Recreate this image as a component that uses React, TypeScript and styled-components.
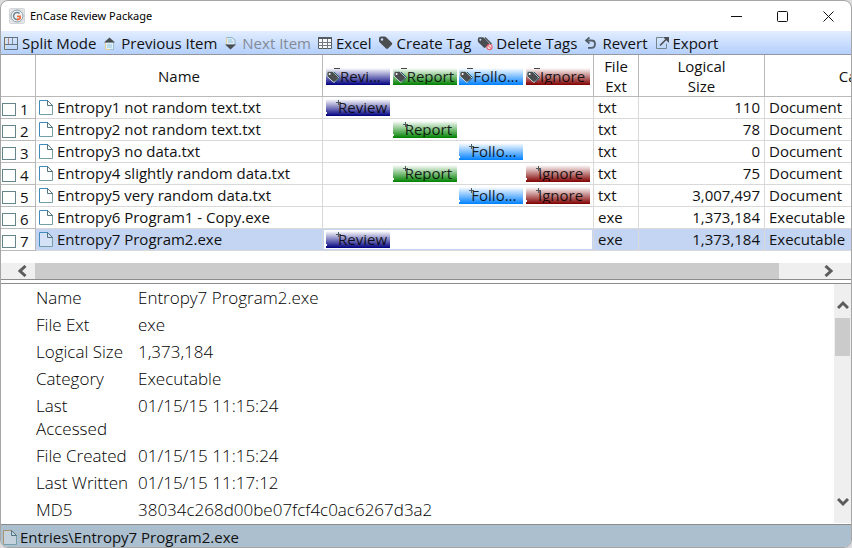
import React from "react";
import styled, { createGlobalStyle } from "styled-components";

const GlobalStyle = createGlobalStyle`
  *, *::before, *::after { box-sizing: border-box; }
  body { margin: 0; background: #dcdcdc; }
  body, button, input, table { font-family: "Open Sans", "Noto Sans", sans-serif; font-size: 15px; color: #111; }
`;

const Window = styled.main`
  display: flex;
  flex-direction: column;
  height: 100vh;
  background: #fff;
  border: 1px solid #a6a6a6;
  border-radius: 8px;
  overflow: hidden;
`;

/* Title bar */
const TitleBar = styled.header`
  display: flex;
  align-items: center;
  height: 30px;
  flex: none;
  padding-left: 8px;
`;
const Title = styled.h1`
  flex: 1;
  margin: 0 0 0 5px;
  font-family: "Noto Sans", "Open Sans", sans-serif;
  font-size: 11px;
  font-weight: 400;
  line-height: 16px;
  color: #000;
`;
const WindowButton = styled.button`
  display: grid;
  place-items: center;
  width: 46px;
  height: 30px;
  padding: 0;
  border: 0;
  background: transparent;
`;

/* Toolbar */
const Toolbar = styled.nav`
  display: flex;
  align-items: center;
  gap: 6px;
  flex: none;
  height: 24px;
  padding-left: 2px;
  background: linear-gradient(#e2edff, #b4d0fd);
  border-bottom: 1px solid #96969e;
`;
const ToolButton = styled.button`
  display: flex;
  align-items: center;
  gap: 3px;
  padding: 0;
  border: 0;
  background: transparent;
  line-height: 22px;
  white-space: nowrap;
  &:disabled { color: #848b96; }
`;

/* Entries table */
const EntriesPane = styled.section`
  flex: none;
  overflow: hidden;
  border-bottom: 1px solid #8c8c8c;
`;
const Entries = styled.table`
  table-layout: fixed;
  width: max(100%, 975px);
  border-collapse: separate;
  border-spacing: 0;
  margin-bottom: 12px;
`;
const Col = styled.col<{ $w?: number }>`
  width: ${(p) => (p.$w ? `${p.$w}px` : "auto")};
`;
const HeadCell = styled.th`
  height: 42px;
  padding: 1px 3px 0;
  border-right: 1px solid #b9b9b9;
  border-bottom: 1px solid #b9b9b9;
  font-weight: 400;
  line-height: 20px;
  text-align: center;
`;
const Row = styled.tr<{ $selected?: boolean }>`
  --row: ${(p) => (p.$selected ? "#c3d5f2" : "#fff")};
`;
const Cell = styled.td<{ $align?: string }>`
  height: 22px;
  padding: 0 4px;
  border-right: 1px solid #d9d9d9;
  border-bottom: 1px solid #d9d9d9;
  background: var(--row);
  line-height: 21px;
  text-align: ${(p) => p.$align ?? "left"};
  white-space: nowrap;
`;
const PickCell = styled(Cell)`
  padding: 0;
  background: #fff;
  border-color: #b9b9b9;
`;
const PickLabel = styled.label`
  display: flex;
  align-items: center;
  gap: 4px;
  height: 21px;
  padding: 4px 0 0 1px;
`;
const Check = styled.input`
  appearance: none;
  width: 14px;
  height: 13px;
  margin: 0;
  border: 1px solid #64868b;
  background: #fff;
  &:checked { background: #64868b; }
`;
const NameCell = styled(Cell)`
  padding-left: 3px;
`;
const NameLine = styled.div`
  display: flex;
  align-items: center;
  gap: 4px;
  height: 21px;
`;
const TagCell = styled(Cell)`
  padding: 0 3px;
  background: #fff;
  box-shadow: inset 0 0 0 1px var(--row);
`;
const TagGrid = styled.div`
  display: grid;
  grid-template-columns: repeat(4, 64px);
  justify-content: space-between;
  align-items: center;
  height: 17px;
`;
const Tag = styled.span<{ $color: string; $col: number; $head?: boolean }>`
  grid-column: ${(p) => p.$col};
  grid-row: 1;
  position: relative;
  display: block;
  height: 17px;
  padding-left: ${(p) => (p.$head ? 14 : 12)}px;
  background: linear-gradient(#fff, ${(p) => p.$color});
  color: rgba(0, 0, 0, 0.85);
  text-align: left;
`;
const TagText = styled.span`
  display: block;
  height: 16px;
  line-height: 17px;
  overflow: hidden;
  white-space: nowrap;
`;
const TagMark = styled.svg`
  position: absolute;
  left: 0;
  top: -1px;
`;

/* Scroll bars */
const HScroll = styled.div`
  display: flex;
  height: 16px;
  background: #efefef;
`;
const HThumb = styled.div`
  flex: 1;
  background: #cbcbcb;
`;
const HButton = styled.button<{ $w: number; $pad: number }>`
  display: flex;
  align-items: center;
  justify-content: flex-end;
  width: ${(p) => p.$w}px;
  padding: 0 ${(p) => p.$pad}px;
  border: 0;
  background: transparent;
`;
const VScroll = styled.div`
  display: flex;
  flex-direction: column;
  width: 17px;
  flex: none;
  margin-bottom: 1px;
  padding: 0 1px;
  background: #efefef;
`;
const VButton = styled.button<{ $h: number; $pad: number }>`
  display: flex;
  align-items: flex-end;
  justify-content: center;
  height: ${(p) => p.$h}px;
  padding: 0 0 ${(p) => p.$pad}px;
  border: 0;
  background: transparent;
`;
const VThumb = styled.div`
  height: 38px;
  background: #cbcbcb;
`;
const VSpace = styled.div`
  flex: 1;
`;

/* Details */
const DetailsPane = styled.section`
  display: flex;
  flex: 1;
  min-height: 0;
  margin-top: 3px;
  border-top: 1px solid #8c8c8c;
  border-bottom: 1px solid #8c8c8c;
`;
const DetailsBody = styled.div`
  flex: 1;
  overflow: hidden;
  padding-left: 35px;
`;
const Details = styled.table`
  border-collapse: collapse;
  color: #000;
  font-size: 17px;
  font-weight: 300;
  line-height: 23px;
  th, td {
    padding: 2px 0;
    font-weight: 300;
    text-align: left;
    vertical-align: top;
  }
  th { width: 102px; padding-right: 8px; }
`;

const StatusBar = styled.footer`
  display: flex;
  align-items: center;
  gap: 3px;
  flex: none;
  height: 22px;
  padding: 2px 0 0 2px;
  background: #abbfce;
  line-height: 20px;
`;

const Icon = ({ children }: { children: React.ReactNode }) => (
  <svg width="16" height="16" viewBox="0 0 16 16" fill="none" aria-hidden="true">
    {children}
  </svg>
);

const tagShape = "M1 3.5 Q1 1.5 3 1.5 L6.5 1.5 Q7.5 1.5 8.2 2.2 L13.8 7.8 Q14.8 8.8 13.8 9.8 L10 13.6 Q9 14.4 8 13.6 L1.8 7.6 Q1 6.8 1 6 Z";

const AppIcon = () => (
  <svg width="16" height="16" viewBox="0 0 16 16" fill="none" aria-hidden="true">
    <rect x="0.5" y="0.5" width="15" height="15" rx="1" fill="#e3e5e6" stroke="#d4d7d9" />
    <circle cx="8" cy="8" r="6" fill="#f3f4f4" stroke="#8a9fab" />
    <path d="M10.6 5.6 A3.5 3.5 0 1 0 8 11.5" stroke="#6d8491" strokeWidth="1.5" />
    <path d="M8 8.3 H11 V10.4 Q10 11.6 8 11.5" stroke="#ed6b3d" strokeWidth="1.8" />
  </svg>
);
const SplitIcon = () => (
  <Icon>
    <path d="M1.5 2 V14.5 H14.5 V2" stroke="#64737e" />
    <path d="M1 2.5 H15 M1 9.5 H15" stroke="#64737e" />
    <path d="M5.5 3 V9" stroke="#b08a80" />
    <path d="M9.5 3 V9" stroke="#7b8d98" />
    <path d="M2.5 3 V9 M2.5 10 V14" stroke="#f0dfb8" />
  </Icon>
);
const PrevIcon = () => (
  <Icon>
    <path d="M3.5 7 H11.5 V14.5 H3.5 Z" fill="#e0f1fb" stroke="#9bbdcc" />
    <path d="M3.5 7 V14.5 H8" stroke="#e3cf9c" />
    <path d="M2 7.5 L7.5 2.5 L13 7.5 Z" fill="#4b4e50" />
    <path d="M5 10 H10 M5 12 H10" stroke="#93c4dc" />
  </Icon>
);
const NextIcon = () => (
  <Icon>
    <path d="M3.5 2.5 H9 L12 5 V10 H3.5 Z" fill="#dcedf7" stroke="#8db3c6" />
    <path d="M3.5 2.5 V10" stroke="#e3cf9c" />
    <path d="M2 9.5 H13 L7.5 14.5 Z" fill="#4b4e50" />
    <path d="M5 5 H9 M5 7 H10" stroke="#93c4dc" />
  </Icon>
);
const ExcelIcon = () => (
  <Icon>
    <path d="M1.5 2.5 H14.5 V13.5 H1.5 Z" fill="#f7faff" stroke="#555c60" />
    <path d="M1 3 H15" stroke="#555c60" strokeWidth="2" />
    <path d="M1.5 7.5 H14.5 M1.5 10.5 H14.5 M5.5 4 V14 M10.5 4 V14" stroke="#717a80" />
  </Icon>
);
const CreateTagIcon = () => (
  <Icon>
    <path d={tagShape} fill="#4b4e50" />
    <circle cx="4" cy="4.5" r="1.2" fill="#c9dcfb" />
  </Icon>
);
const DeleteTagsIcon = () => (
  <Icon>
    <path d={tagShape} transform="translate(0 1) scale(.85)" fill="#4b4e50" />
    <path d="M8 2.5 L14 8.5 L12 11" stroke="#4b4e50" strokeWidth="1.3" />
    <circle cx="3.4" cy="4.8" r="1" fill="#c9dcfb" />
    <circle cx="12.5" cy="12" r="2.7" fill="#f6e8ef" stroke="#e0454e" />
    <path d="M10.7 10.2 L14.4 13.8" stroke="#e0454e" />
  </Icon>
);
const RevertIcon = () => (
  <Icon>
    <path d="M6.5 2.5 L3 5.5 L6.5 8.5" stroke="#53606a" strokeWidth="1.7" />
    <path d="M3.5 5.5 H8.5 Q12 5.5 12 9 Q12 12.8 8.5 12.8 H5" stroke="#53606a" strokeWidth="1.8" />
  </Icon>
);
const ExportIcon = () => (
  <Icon>
    <path d="M9 2.5 H2.5 V13.5 H12.5 V8.5" stroke="#76858c" />
    <path d="M6 10.5 L12.5 4" stroke="#4b4e50" strokeWidth="1.6" />
    <path d="M9 2 H15 V8 Z" fill="#4b4e50" />
  </Icon>
);
const FileIcon = ({ tone = "#3f8bbb" }: { tone?: string }) => (
  <svg width="14" height="15" viewBox="0 0 14 15" fill="none" aria-hidden="true">
    <path d="M0.5 0.5 H9 L13.5 5 V14.5 H0.5 Z" fill="#fff" fillOpacity=".3" />
    <path d="M0.5 14.5 V0.5 H9" stroke={tone} />
    <path d="M13.5 5 V14.5 H0.5" stroke="#749fa6" />
    <path d="M8.5 0.5 V5.5 H13.5 L8.8 0.7" stroke="#527582" />
  </svg>
);

const Chevron = ({ d, vertical }: { d: string; vertical?: boolean }) => (
  <svg width={vertical ? 12 : 10} height={vertical ? 10 : 12} viewBox={vertical ? "0 0 12 10" : "0 0 10 12"} fill="none" aria-hidden="true">
    <path d={d} stroke="#5c5c5c" strokeWidth="3" />
  </svg>
);

const HeadMark = () => (
  <TagMark width="18" height="18" viewBox="0 0 18 18" fill="none" aria-hidden="true">
    <path d="M8 1.5 H14" stroke="#444" />
    <path d={tagShape} transform="translate(0 3) scale(.88)" fill="#4b4e50" stroke="#d6e9ee" strokeWidth="1" />
    <path d="M8 5 L13.5 10.5 L9.5 15" stroke="#24586a" />
    <circle cx="3.6" cy="7" r="1" fill="#fff" />
  </TagMark>
);
const RowMark = () => (
  <TagMark width="18" height="18" viewBox="0 0 18 18" fill="none" aria-hidden="true">
    <path d="M10 4.5 H15 M12.5 2 V7" stroke="#4a5960" />
    <path d="M0 15 H1" stroke="#fff" strokeWidth="2" />
  </TagMark>
);

const tags = [
  { id: "review", text: "Review", head: "Revi...", color: "#000080" },
  { id: "report", text: "Report", head: "Report", color: "#008000" },
  { id: "follow", text: "Follo...", head: "Follo...", color: "#0080ff" },
  { id: "ignore", text: "Ignore", head: "Ignore", color: "#800000" },
];

const entries = [
  { name: "Entropy1 not random text.txt", tags: ["review"], ext: "txt", size: "110", category: "Document" },
  { name: "Entropy2 not random text.txt", tags: ["report"], ext: "txt", size: "78", category: "Document" },
  { name: "Entropy3 no data.txt", tags: ["follow"], ext: "txt", size: "0", category: "Document" },
  { name: "Entropy4 slightly random data.txt", tags: ["report", "ignore"], ext: "txt", size: "75", category: "Document" },
  { name: "Entropy5 very random data.txt", tags: ["follow", "ignore"], ext: "txt", size: "3,007,497", category: "Document" },
  { name: "Entropy6 Program1 - Copy.exe", tags: [], ext: "exe", size: "1,373,184", category: "Executable" },
  { name: "Entropy7 Program2.exe", tags: ["review"], ext: "exe", size: "1,373,184", category: "Executable" },
];

const details = [
  ["Name", "Entropy7 Program2.exe"],
  ["File Ext", "exe"],
  ["Logical Size", "1,373,184"],
  ["Category", "Executable"],
  ["Last Accessed", "01/15/15 11:15:24"],
  ["File Created", "01/15/15 11:15:24"],
  ["Last Written", "01/15/15 11:17:12"],
  ["MD5", "38034c268d00be07fcf4c0ac6267d3a2"],
];

const tools = [
  { label: "Split Mode", icon: <SplitIcon /> },
  { label: "Previous Item", icon: <PrevIcon /> },
  { label: "Next Item", icon: <NextIcon />, disabled: true },
  { label: "Excel", icon: <ExcelIcon /> },
  { label: "Create Tag", icon: <CreateTagIcon /> },
  { label: "Delete Tags", icon: <DeleteTagsIcon /> },
  { label: "Revert", icon: <RevertIcon /> },
  { label: "Export", icon: <ExportIcon /> },
];

export default function App() {
  const selected = 6;
  return (
    <>
      <GlobalStyle />
      <Window>
        <TitleBar>
          <AppIcon />
          <Title>EnCase Review Package</Title>
          <WindowButton aria-label="Minimize">
            <svg width="11" height="11" viewBox="0 0 11 11"><path d="M0 5.5 H11" stroke="#111" /></svg>
          </WindowButton>
          <WindowButton aria-label="Maximize">
            <svg width="11" height="11" viewBox="0 0 11 11"><rect x="0.5" y="0.5" width="10" height="10" rx="1" fill="none" stroke="#111" /></svg>
          </WindowButton>
          <WindowButton aria-label="Close">
            <svg width="11" height="11" viewBox="0 0 11 11"><path d="M0.5 0.5 L10.5 10.5 M10.5 0.5 L0.5 10.5" stroke="#111" /></svg>
          </WindowButton>
        </TitleBar>

        <Toolbar aria-label="Actions">
          {tools.map((t) => (
            <ToolButton key={t.label} disabled={t.disabled}>
              {t.icon}
              {t.label}
            </ToolButton>
          ))}
        </Toolbar>

        <EntriesPane>
          <Entries>
            <colgroup>
              <Col $w={35} />
              <Col $w={287} />
              <Col $w={271} />
              <Col $w={45} />
              <Col $w={126} />
              <Col />
            </colgroup>
            <thead>
              <tr>
                <HeadCell aria-label="Selected" />
                <HeadCell>Name</HeadCell>
                <HeadCell>
                  <TagGrid>
                    {tags.map((t, i) => (
                      <Tag key={t.id} $color={t.color} $col={i + 1} $head>
                        <HeadMark />
                        <TagText>{t.head}</TagText>
                      </Tag>
                    ))}
                  </TagGrid>
                </HeadCell>
                <HeadCell>File<br />Ext</HeadCell>
                <HeadCell>Logical<br />Size</HeadCell>
                <HeadCell>Category</HeadCell>
              </tr>
            </thead>
            <tbody>
              {entries.map((e, i) => (
                <Row key={e.name} $selected={i === selected}>
                  <PickCell>
                    <PickLabel>
                      <Check type="checkbox" />
                      {i + 1}
                    </PickLabel>
                  </PickCell>
                  <NameCell>
                    <NameLine>
                      <FileIcon />
                      {e.name}
                    </NameLine>
                  </NameCell>
                  <TagCell>
                    <TagGrid>
                      {tags.map((t, c) =>
                        e.tags.includes(t.id) ? (
                          <Tag key={t.id} $color={t.color} $col={c + 1}>
                            <RowMark />
                            <TagText>{t.text}</TagText>
                          </Tag>
                        ) : null
                      )}
                    </TagGrid>
                  </TagCell>
                  <Cell>{e.ext}</Cell>
                  <Cell $align="right">{e.size}</Cell>
                  <Cell>{e.category}</Cell>
                </Row>
              ))}
            </tbody>
          </Entries>
          <HScroll>
            <HButton $w={34} $pad={8} aria-label="Scroll left">
              <Chevron d="M8.5 1 L3 6 L8.5 11" />
            </HButton>
            <HThumb />
            <HButton $w={72} $pad={17} aria-label="Scroll right">
              <Chevron d="M1.5 1 L7 6 L1.5 11" />
            </HButton>
          </HScroll>
        </EntriesPane>

        <DetailsPane>
          <DetailsBody>
            <Details>
              <tbody>
                {details.map(([k, v]) => (
                  <tr key={k}>
                    <th scope="row">{k}</th>
                    <td>{v}</td>
                  </tr>
                ))}
              </tbody>
            </Details>
          </DetailsBody>
          <VScroll>
            <VButton $h={34} $pad={8} aria-label="Scroll up">
              <Chevron vertical d="M1 8 L6 3 L11 8" />
            </VButton>
            <VThumb />
            <VSpace />
            <VButton $h={34} $pad={16} aria-label="Scroll down">
              <Chevron vertical d="M1 2 L6 7 L11 2" />
            </VButton>
          </VScroll>
        </DetailsPane>

        <StatusBar>
          <FileIcon tone="#a8946c" />
          Entries\Entropy7 Program2.exe
        </StatusBar>
      </Window>
    </>
  );
}
